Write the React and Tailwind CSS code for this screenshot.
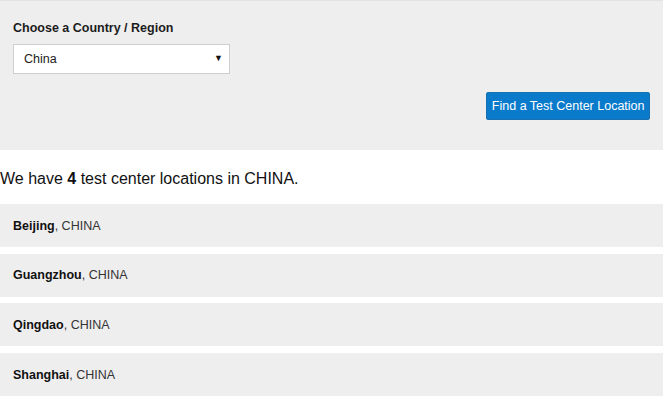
import { useState } from 'react'

const cities = ['Beijing', 'Guangzhou', 'Qingdao', 'Shanghai']

const App = () => {
  const [country, setCountry] = useState('China')

  return (
    <div className="w-[667px] h-[398px] overflow-hidden bg-white font-['Liberation_Sans',Arial,sans-serif] text-[#222]">
      <div className="w-[663px]">
        {/* Search panel */}
        <div className="h-[150px] bg-[#efeeef] border-t border-[#e4e3e4] px-[13px] pt-[19px]">
          <label className="block text-[12.5px] font-bold text-[#1c1c1c] leading-[16px]">
            Choose a Country / Region
          </label>
          <div className="relative mt-[8px] w-[217px]">
            <select
              value={country}
              onChange={(e) => setCountry(e.target.value)}
              className="w-full h-[30px] appearance-none bg-white border border-[#cfcfcf] pl-[10px] pr-6 text-[12.5px] text-[#222] outline-none"
            >
              <option>China</option>
              <option>Japan</option>
              <option>Korea</option>
            </select>
            <span className="pointer-events-none absolute right-[7px] top-[8px] text-[9px] text-[#111]">▼</span>
          </div>
          <div className="flex justify-end mt-[18px]">
            <button
              type="button"
              className="h-[28px] px-[4.5px] bg-[#0a7acb] border border-[#1a6fb0] rounded-[2px] text-white text-[12.5px]"
            >
              Find a Test Center Location
            </button>
          </div>
        </div>

        {/* Results */}
        <p className="h-[54px] flex items-center pt-[3px] text-[16px] text-[#111]">
          We have&nbsp;<b>4</b>&nbsp;test center locations in CHINA.
        </p>
        <div className="flex flex-col gap-[6.7px]">
          {cities.map((c) => (
            <div key={c} className="h-[43px] bg-[#efeeef] flex items-center pt-[1px] px-[13px] text-[12.5px] text-[#333]">
              <b className="text-[#111]">{c}</b>, CHINA
            </div>
          ))}
        </div>
      </div>
    </div>
  )
}

export default App
